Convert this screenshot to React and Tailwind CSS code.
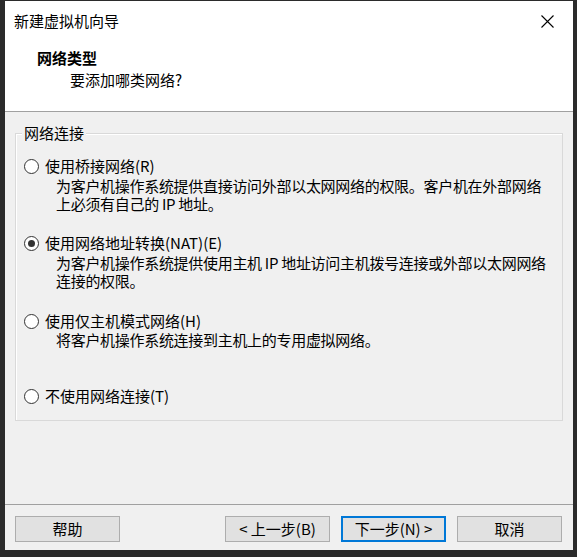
import React, { useState } from 'react';

const font = { fontFamily: '"Noto Sans CJK SC", "Noto Sans", sans-serif' };

function Radio({ checked, label, onSelect, className = '' }) {
  return (
    <div className={`flex items-center h-[20px] cursor-default ${className}`} onClick={onSelect}>
      <div className="w-[15px] h-[15px] rounded-full border border-[#333333] bg-white flex items-center justify-center shrink-0">
        {checked && <div className="w-[7px] h-[7px] rounded-full bg-[#333333]" />}
      </div>
      <span className="ml-[6px] text-[15px] leading-[20px] text-black">{label}</span>
    </div>
  );
}

function Desc({ lines, className = '' }) {
  return (
    <div className={`pl-[32px] text-[15px] leading-[18px] tracking-[-0.3px] text-black ${className}`}>
      {lines.map((l, i) => (
        <div key={i} className="whitespace-nowrap">{l}</div>
      ))}
    </div>
  );
}

function Btn({ children, primary }) {
  return (
    <button
      className={`h-[26px] w-[105px] bg-[#e1e1e1] text-[15px] leading-[20px] text-black flex items-center justify-center ${
        primary ? 'border-2 border-[#0078d7]' : 'border border-[#adadad]'
      }`}
    >
      {children}
    </button>
  );
}

export default function App() {
  const [mode, setMode] = useState('nat');

  return (
    <div className="w-[577px] h-[557px] bg-[#2b2b2b] pl-[5px] pt-[1px] overflow-hidden" style={font}>
      <div className="w-[568px] h-[549px] bg-[#f0f0f0] flex flex-col">
        {/* header */}
        <div className="h-[110px] bg-white relative">
          <div className="h-[40px] flex items-center justify-between pl-[9px] pr-[19px]">
            <span className="text-[15px] leading-[20px] text-black">新建虚拟机向导</span>
            <svg width="13" height="13" viewBox="0 0 13 13">
              <path d="M0.5 0.5 L12.5 12.5 M12.5 0.5 L0.5 12.5" stroke="#000" strokeWidth="1.1" fill="none" />
            </svg>
          </div>
          <div className="pl-[32px] mt-[7px] text-[15px] leading-[20px] font-bold text-black">网络类型</div>
          <div className="pl-[65px] mt-[2px] text-[15px] leading-[20px] text-black">要添加哪类网络?</div>
        </div>
        <div className="h-px bg-[#a0a0a0]" />

        {/* body */}
        <div className="px-[10px] pt-[21px]">
          <div className="relative h-[288px] border border-[#d9d9d9] shadow-[inset_1px_1px_0_#ffffff]">
            <span className="absolute left-[6px] top-[-11px] px-[2px] bg-[#f0f0f0] text-[15px] leading-[20px] text-black">
              网络连接
            </span>
            <div className="pl-[8px]">
              <Radio className="mt-[22px]" label="使用桥接网络(R)" checked={mode === 'bridge'} onSelect={() => setMode('bridge')} />
              <Desc
                className="mt-px"
                lines={['为客户机操作系统提供直接访问外部以太网网络的权限。客户机在外部网络', '上必须有自己的 IP 地址。']}
              />
              <Radio className="mt-[20px]" label="使用网络地址转换(NAT)(E)" checked={mode === 'nat'} onSelect={() => setMode('nat')} />
              <Desc
                className="mt-px"
                lines={['为客户机操作系统提供使用主机 IP 地址访问主机拨号连接或外部以太网网络', '连接的权限。']}
              />
              <Radio className="mt-[21px]" label="使用仅主机模式网络(H)" checked={mode === 'host'} onSelect={() => setMode('host')} />
              <Desc className="mt-0" lines={['将客户机操作系统连接到主机上的专用虚拟网络。']} />
              <Radio className="mt-[37px]" label="不使用网络连接(T)" checked={mode === 'none'} onSelect={() => setMode('none')} />
            </div>
          </div>
        </div>

        {/* footer */}
        <div className="mt-[83px] h-px bg-[#a0a0a0]" />
        <div className="mt-[11px] flex pl-[10px] pr-[11px]">
          <div className="w-[106px]">
            <Btn>帮助</Btn>
          </div>
          <div className="ml-auto flex gap-[11px]">
            <Btn>&lt; 上一步(B)</Btn>
            <Btn primary>下一步(N) &gt;</Btn>
            <Btn>取消</Btn>
          </div>
        </div>
      </div>
    </div>
  );
}
